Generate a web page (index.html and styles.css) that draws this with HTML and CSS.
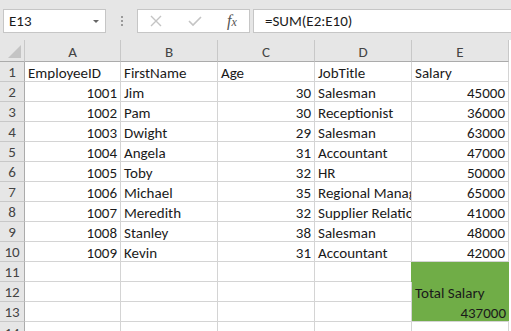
FILE: index.html
```html
<!DOCTYPE html>
<html lang="en">
<head>
    <meta charset="UTF-8">
    <title>Book1 - Excel</title>
    <link rel="stylesheet" href="styles.css">
</head>
<body>
    <div class="formula-bar">
        <div class="name-box">
            <span>E13</span>
            <span class="caret"></span>
        </div>
        <div class="grip"><i></i><i></i><i></i></div>
        <div class="fx-box">
            <svg class="btn" width="14" height="14" viewBox="0 0 14 14"><path d="M2 2 L12 12 M12 2 L2 12" stroke="#c4c4c4" stroke-width="1.4" fill="none"/></svg>
            <svg class="btn" width="16" height="14" viewBox="0 0 16 14"><path d="M2 7 L6 11 L14 3" stroke="#c4c4c4" stroke-width="1.6" fill="none"/></svg>
            <span class="fx">f<small>x</small></span>
        </div>
        <div class="formula">=SUM(E2:E10)</div>
    </div>

    <div class="sheet">
        <div class="hd corner"><span class="tri"></span></div>
        <div class="hd col">A</div>
        <div class="hd col">B</div>
        <div class="hd col">C</div>
        <div class="hd col">D</div>
        <div class="hd col">E</div>

        <div class="hd row">1</div>
        <div class="c">EmployeeID</div><div class="c">FirstName</div><div class="c">Age</div><div class="c">JobTitle</div><div class="c">Salary</div>

        <div class="hd row">2</div>
        <div class="c n">1001</div><div class="c">Jim</div><div class="c n">30</div><div class="c">Salesman</div><div class="c n">45000</div>

        <div class="hd row">3</div>
        <div class="c n">1002</div><div class="c">Pam</div><div class="c n">30</div><div class="c">Receptionist</div><div class="c n">36000</div>

        <div class="hd row">4</div>
        <div class="c n">1003</div><div class="c">Dwight</div><div class="c n">29</div><div class="c">Salesman</div><div class="c n">63000</div>

        <div class="hd row">5</div>
        <div class="c n">1004</div><div class="c">Angela</div><div class="c n">31</div><div class="c">Accountant</div><div class="c n">47000</div>

        <div class="hd row">6</div>
        <div class="c n">1005</div><div class="c">Toby</div><div class="c n">32</div><div class="c">HR</div><div class="c n">50000</div>

        <div class="hd row">7</div>
        <div class="c n">1006</div><div class="c">Michael</div><div class="c n">35</div><div class="c">Regional Manager</div><div class="c n">65000</div>

        <div class="hd row">8</div>
        <div class="c n">1007</div><div class="c">Meredith</div><div class="c n">32</div><div class="c">Supplier Relations</div><div class="c n">41000</div>

        <div class="hd row">9</div>
        <div class="c n">1008</div><div class="c">Stanley</div><div class="c n">38</div><div class="c">Salesman</div><div class="c n">48000</div>

        <div class="hd row">10</div>
        <div class="c n">1009</div><div class="c">Kevin</div><div class="c n">31</div><div class="c">Accountant</div><div class="c n">42000</div>

        <div class="hd row">11</div>
        <div class="c"></div><div class="c"></div><div class="c"></div><div class="c"></div>
        <div class="total">
            <div class="line">Total Salary</div>
            <div class="line n">437000</div>
        </div>

        <div class="hd row">12</div>
        <div class="c"></div><div class="c"></div><div class="c"></div><div class="c"></div>

        <div class="hd row">13</div>
        <div class="c"></div><div class="c"></div><div class="c"></div><div class="c"></div>

        <div class="hd row last">14</div>
        <div class="c"></div><div class="c"></div><div class="c"></div><div class="c"></div><div class="c"></div>
    </div>
</body>
</html>
```

FILE: styles.css
```css
body {
    margin: 0;
    width: 511px;
    height: 331px;
    overflow: hidden;
    background: #fff;
    font-family: Calibri, Carlito, "Liberation Sans", Arial, sans-serif;
    font-size: 15px;
    color: #1a1a1a;
}

/* formula bar */
.formula-bar {
    height: 40px;
    background: #e6e6e6;
    display: flex;
    align-items: flex-start;
    padding-top: 9px;
    box-sizing: border-box;
}
.name-box {
    margin-left: 3px;
    width: 103px;
    height: 24px;
    box-sizing: border-box;
    background: #fff;
    border: 1px solid #c6c6c6;
    display: flex;
    align-items: center;
    justify-content: space-between;
    padding: 0 6px 0 5px;
}
.caret {
    width: 0;
    height: 0;
    border-left: 3px solid transparent;
    border-right: 3px solid transparent;
    border-top: 3px solid #666;
}
.grip {
    width: 31px;
    height: 24px;
    display: flex;
    flex-direction: column;
    align-items: center;
    justify-content: center;
    gap: 2px;
}
.grip i {
    width: 2px;
    height: 2px;
    background: #9a9a9a;
}
.fx-box {
    width: 113px;
    height: 24px;
    box-sizing: border-box;
    background: #fff;
    border: 1px solid #c6c6c6;
    display: flex;
    align-items: center;
    padding-left: 11px;
    gap: 24px;
}
.fx {
    font-family: "Liberation Serif", "DejaVu Serif", serif;
    font-style: italic;
    font-size: 16px;
    color: #555;
}
.fx small {
    font-size: 12px;
}
.formula {
    flex: 1;
    margin-left: 3px;
    height: 24px;
    box-sizing: border-box;
    background: #fff;
    border: 1px solid #c6c6c6;
    border-right: none;
    padding-left: 11px;
    line-height: 22px;
}

/* grid */
.sheet {
    display: grid;
    grid-template-columns: 25px 96px 97px 97px 97px 97px;
    grid-template-rows: 22px;
    grid-auto-rows: 20px;
}
.hd {
    background: #e6e6e6;
    color: #444;
    box-sizing: border-box;
    display: flex;
    align-items: center;
    justify-content: center;
}
.corner {
    border-right: 1px solid #c8c8c8;
    border-bottom: 1px solid #ababab;
    position: relative;
}
.tri {
    position: absolute;
    right: 3px;
    bottom: 3px;
    width: 0;
    height: 0;
    border-left: 13px solid transparent;
    border-bottom: 13px solid #c4c4c4;
}
.col {
    border-right: 1px solid #c8c8c8;
    border-bottom: 1px solid #ababab;
    padding-top: 2px;
}
.row {
    border-right: 1px solid #ababab;
    border-bottom: 1px solid #c8c8c8;
    padding-top: 1px;
}
.row.last {
    align-items: flex-start;
    padding-top: 2px;
}
.c {
    box-sizing: border-box;
    border-right: 1px solid #d4d4d4;
    border-bottom: 1px solid #d4d4d4;
    display: flex;
    align-items: flex-end;
    padding: 0 3px;
    line-height: 16px;
    white-space: nowrap;
    overflow: hidden;
}
.c.n {
    justify-content: flex-end;
}
.total {
    grid-row: span 3;
    background: #70ad47;
    border-bottom: 1px solid #d4d4d4;
    margin-left: -1px;
    display: flex;
    flex-direction: column;
    justify-content: flex-end;
}
.total .line {
    height: 20px;
    display: flex;
    align-items: flex-end;
    padding: 0 3px 1px 4px;
    line-height: 16px;
    box-sizing: border-box;
}
.total .line:last-child {
    height: 19px;
    padding-bottom: 0;
}
.total .line.n {
    justify-content: flex-end;
}
```
